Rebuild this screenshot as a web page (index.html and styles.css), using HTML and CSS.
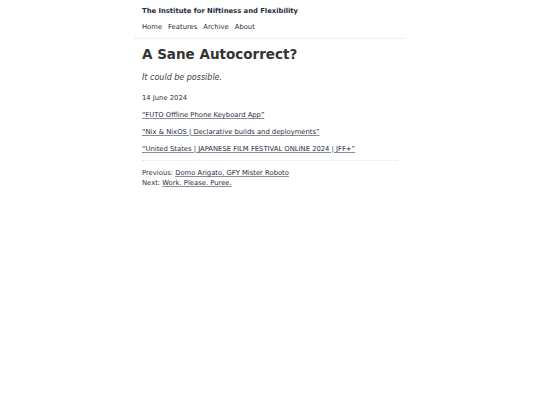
FILE: index.html
```html
<!DOCTYPE html>
<html>
<head>
<meta charset="utf-8">
<link rel="stylesheet" href="styles.css">
</head>
<body>
<div class="page">
  <header class="site-header">
    <div class="site-title"><a href="#">The Institute for Niftiness and Flexibility</a></div>
    <nav class="nav">
      <a href="#">Home</a>
      <a href="#">Features</a>
      <a href="#">Archive</a>
      <a href="#">About</a>
    </nav>
  </header>
  <main class="post">
    <h1 class="post-title">A Sane Autocorrect?</h1>
    <p class="subtitle">It could be possible.</p>
    <p class="date">14 June 2024</p>
    <p class="link"><a href="#">“FUTO Offline Phone Keyboard App”</a></p>
    <p class="link"><a href="#">“Nix &amp; NixOS | Declarative builds and deployments”</a></p>
    <p class="link"><a href="#">“United States | JAPANESE FILM FESTIVAL ONLINE 2024 | JFF+”</a></p>
    <div class="pager">
      <div>Previous: <a href="#">Domo Arigato, GFY Mister Roboto</a></div>
      <div>Next: <a href="#">Work. Please. Puree.</a></div>
    </div>
  </main>
</div>
</body>
</html>
```
FILE: styles.css
```css
html, body {
  margin: 0;
  padding: 0;
  background: #fff;
}
body {
  font-family: "DejaVu Sans", Verdana, sans-serif;
  color: #333;
  font-size: 6.8px;
}
.page {
  width: 270px;
  margin: 0 auto;
}
.site-header {
  padding: 6px 7px 7px;
  border-bottom: 1px dotted #e2e2e2;
}
.site-title {
  margin-top: 1px;
}
.site-title a {
  font-weight: bold;
  color: #1f2d3d;
  text-decoration: none;
}
.nav {
  margin-top: 8px;
  display: flex;
  gap: 6px;
}
.nav a {
  color: #1f2d3d;
  text-decoration: none;
}
.post {
  padding: 0 7px;
}
.post-title {
  font-size: 13.5px;
  margin: 7px 0 0;
  color: #333;
}
.subtitle {
  font-style: italic;
  font-size: 8px;
  color: #444;
  margin: 11px 0 0;
}
.date {
  margin: 12px 0 0;
}
.link {
  margin: 9px 0 0;
}
.link a, .pager a {
  color: #1f2d3d;
  text-decoration-color: #8a8f96;
}
.pager {
  margin-top: 7px;
  border-top: 1px dotted #e2e2e2;
  padding-top: 7px;
  line-height: 10px;
}
```
